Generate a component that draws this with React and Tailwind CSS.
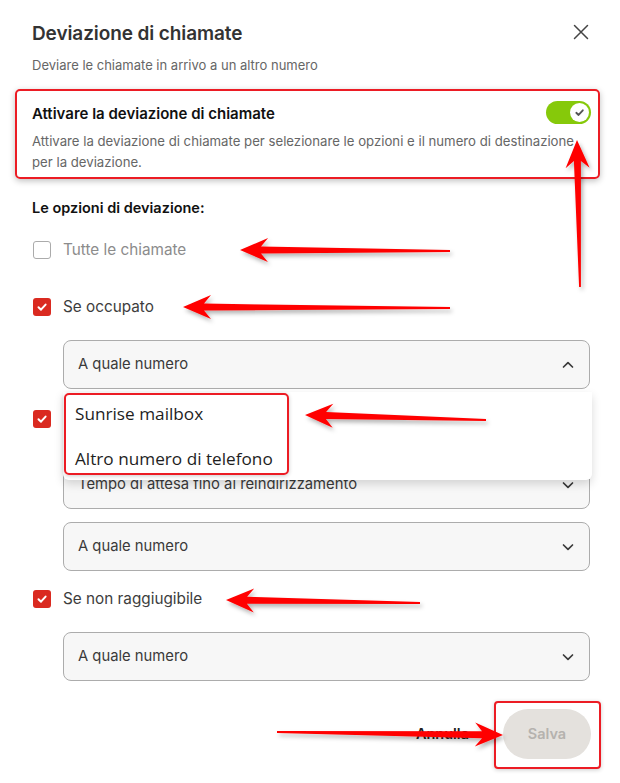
import React from "react";

function arrowPoints(x1, y1, x2, y2, headLen = 28, headW = 12, shaftW = 3.5, tailW = 0.9) {
  const dx = x2 - x1, dy = y2 - y1;
  const L = Math.hypot(dx, dy);
  const ux = dx / L, uy = dy / L;
  const nx = -uy, ny = ux;
  const p = (a, c) => [x2 - ux * a + nx * c, y2 - uy * a + ny * c];
  const pts = [
    p(0, 0),
    p(headLen, headW),
    p(headLen - 7, shaftW),
    p(L, tailW),
    p(L, -tailW),
    p(headLen - 7, -shaftW),
    p(headLen, -headW),
  ];
  return pts.map((q) => q[0].toFixed(1) + "," + q[1].toFixed(1)).join(" ");
}

function Arrows() {
  const arrows = [
    [580, 287, 577, 140],
    [450, 251, 240, 250],
    [450, 308, 183, 307],
    [486, 420, 305, 415],
    [420, 603, 226, 600],
    [277, 732, 503, 735],
  ];
  return (
    <svg className="absolute left-0 top-0 pointer-events-none" width="620" height="783">
      <defs>
        <filter id="sh" x="-20%" y="-50%" width="140%" height="200%">
          <feDropShadow dx="2" dy="3" stdDeviation="2" floodColor="#000" floodOpacity="0.3" />
        </filter>
      </defs>
      {arrows.map((a, i) => (
        <polygon key={i} points={arrowPoints(...a)} fill="#ff0000" filter="url(#sh)" />
      ))}
    </svg>
  );
}

function Check({ color = "#fff", size = 12 }) {
  return (
    <svg width={size} height={size} viewBox="0 0 12 12" fill="none">
      <path d="M2.5 6.3 L5 8.7 L9.6 3.6" stroke={color} strokeWidth="2" strokeLinecap="round" strokeLinejoin="round" />
    </svg>
  );
}

function Checkbox({ checked, label, muted }) {
  return (
    <div className="flex items-center h-[20px]">
      {checked ? (
        <div className="w-[18px] h-[18px] rounded-[3px] bg-[#da2a20] flex items-center justify-center ml-[1px]">
          <Check />
        </div>
      ) : (
        <div className="w-[18px] h-[18px] rounded-[3px] border-[1.5px] border-[#ababab] bg-white ml-[1px]" />
      )}
      <span className={"ml-[12px] text-[15.3px] leading-[20px] " + (muted ? "text-[#8c8c8c]" : "text-[#3d3d3d]")}>
        {label}
      </span>
    </div>
  );
}

function Chevron({ up }) {
  return (
    <svg width="14" height="14" viewBox="0 0 14 14" fill="none">
      <path
        d={up ? "M2.5 9 L7 4.6 L11.5 9" : "M2.5 5 L7 9.4 L11.5 5"}
        stroke="#3a3a3a"
        strokeWidth="1.7"
        strokeLinecap="round"
        strokeLinejoin="round"
      />
    </svg>
  );
}

function Select({ text, up, h = "h-[49px]" }) {
  return (
    <div className={"ml-[31px] w-[527px] " + h + " rounded-[8px] border-[1.5px] border-[#acacac] bg-[#f7f7f7] flex items-center justify-between pl-[14px] pr-[14px]"}>
      <span className="text-[14.8px] text-[#3a3a3a]">{text}</span>
      <Chevron up={up} />
    </div>
  );
}

export default function App() {
  return (
    <div
      className="relative w-[620px] h-[783px] bg-white overflow-hidden"
      style={{ fontFamily: "Inter, 'Noto Sans', sans-serif" }}
    >
      <div className="px-[32px]">
        <div className="pt-[22px] flex justify-between items-start">
          <h1 className="text-[19px] leading-[24px] font-semibold text-[#333333] tracking-[-0.1px]">Deviazione di chiamate</h1>
          <svg className="mt-[1px] mr-[-2px]" width="18" height="18" viewBox="0 0 18 18" fill="none">
            <path d="M2.5 2.5 L15.5 15.5 M15.5 2.5 L2.5 15.5" stroke="#444" strokeWidth="1.5" strokeLinecap="round" />
          </svg>
        </div>
        <p className="mt-[9px] text-[13px] leading-[20px] text-[#666666]">Deviare le chiamate in arrivo a un altro numero</p>
      </div>

      <div className="ml-[15px] w-[585px] mt-[14px] border-2 border-[#ec1c24] rounded-[5px] pl-[15px] pr-[7px] pt-[10px] pb-[4px] shadow-[0_2px_6px_rgba(0,0,0,0.25)]">
        <div className="flex justify-between items-start">
          <span className="mt-[3px] text-[15px] leading-[20px] font-semibold text-[#111]">Attivare la deviazione di chiamate</span>
          <div className="w-[45px] h-[23px] rounded-full bg-[#86c90a] flex items-center justify-end pr-[2px]">
            <div className="w-[19px] h-[19px] rounded-full bg-white flex items-center justify-center">
              <Check color="#555" size={11} />
            </div>
          </div>
        </div>
        <p className="mt-[7px] text-[13.2px] leading-[21px] text-[#666666]">
          Attivare la deviazione di chiamate per selezionare le opzioni e il numero di destinazione
          <br />
          per la deviazione.
        </p>
      </div>

      <div className="px-[32px]">
        <div className="mt-[19px] text-[14.5px] leading-[20px] font-semibold text-[#111]">Le opzioni di deviazione:</div>
        <div className="mt-[22px]">
          <Checkbox label="Tutte le chiamate" muted />
        </div>
        <div className="mt-[37px]">
          <Checkbox label="Se occupato" checked />
        </div>
        <div className="mt-[23px]">
          <Select text="A quale numero" up h="h-[49px]" />
        </div>
        <div className="mt-[20px]">
          <Checkbox label="Se nessuna risposta" checked />
        </div>
        <div className="mt-[31px]">
          <Select text="Tempo di attesa fino al reindirizzamento" />
        </div>
        <div className="mt-[13px]">
          <Select text="A quale numero" />
        </div>
        <div className="mt-[18px]">
          <Checkbox label="Se non raggiugibile" checked />
        </div>
        <div className="mt-[23px]">
          <Select text="A quale numero" />
        </div>
        <div className="mt-[28px] flex justify-end items-center">
          <span className="text-[14.5px] font-semibold text-[#222] mr-[34px]">Annulla</span>
          <div className="w-[88px] h-[50px] rounded-full bg-[#e4e1dd] flex items-center justify-center mr-[-3px]">
            <span className="text-[14.5px] font-semibold text-[#b5b2ae]">Salva</span>
          </div>
        </div>
      </div>

      {/* open dropdown menu overlay */}
      <div
        className="absolute left-[63px] top-[392px] w-[529px] h-[88px] bg-white rounded-b-[6px] shadow-[0_4px_10px_rgba(0,0,0,0.15)]"
        style={{ fontFamily: "'Open Sans', 'Noto Sans', sans-serif" }}
      >
        <div className="absolute left-[1px] top-[1px] w-[225px] h-[82px] border-2 border-[#ec1c24] rounded-[5px] shadow-[0_1px_4px_rgba(0,0,0,0.2)]" />
        <div className="pl-[12px] pt-[11px] text-[17.2px] leading-[22px] text-[#1e1e1e]">Sunrise mailbox</div>
        <div className="pl-[12px] mt-[23px] text-[17.2px] leading-[22px] text-[#1e1e1e]">Altro numero di telefono</div>
      </div>

      {/* annotation box around Salva */}
      <div className="absolute left-[494px] top-[701px] w-[107px] h-[68px] border-2 border-[#ec1c24] rounded-[4px] shadow-[0_1px_4px_rgba(0,0,0,0.2)]" />

      <Arrows />
    </div>
  );
}
